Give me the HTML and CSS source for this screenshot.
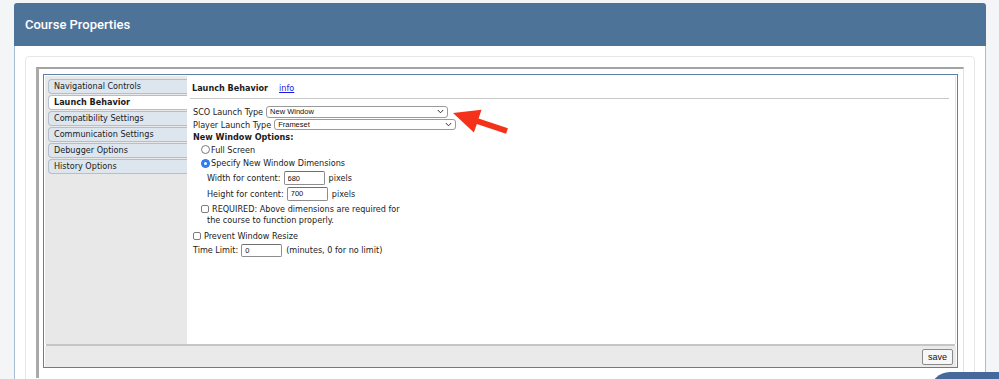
FILE: index.html
```html
<!DOCTYPE html>
<html>
<head>
<meta charset="utf-8">
<title>Course Properties</title>
<link rel="stylesheet" href="styles.css">
</head>
<body>
<div class="panel">
  <div class="panel-head">Course Properties</div>
  <div class="panel-body">
    <div class="well">
      <div class="frame">
        <div class="props">
          <div class="props-main">
            <ul class="tabs">
              <li class="tab">Navigational Controls</li>
              <li class="tab active">Launch Behavior</li>
              <li class="tab">Compatibility Settings</li>
              <li class="tab">Communication Settings</li>
              <li class="tab">Debugger Options</li>
              <li class="tab">History Options</li>
            </ul>
            <div class="content">
              <div class="heading"><span class="title">Launch Behavior</span><a class="info" href="#">info</a></div>
              <div class="rule"></div>
              <div class="row r-sco">
                <span class="lbl">SCO Launch Type</span>
                <span class="sel"><select><option>New Window</option></select><svg class="chev" width="7" height="5" viewBox="0 0 7 5"><path d="M0.8 1 L3.5 3.8 L6.2 1" fill="none" stroke="#333" stroke-width="1"/></svg></span>
              </div>
              <div class="row r-player">
                <span class="lbl">Player Launch Type</span>
                <span class="sel sel-b"><select><option>Frameset</option></select><svg class="chev" width="7" height="5" viewBox="0 0 7 5"><path d="M0.8 1 L3.5 3.8 L6.2 1" fill="none" stroke="#333" stroke-width="1"/></svg></span>
              </div>
              <div class="row r-opts"><b>New Window Options:</b></div>
              <div class="row r-full"><span class="radio"></span>Full Screen</div>
              <div class="row r-spec"><span class="radio checked"></span>Specify New Window Dimensions</div>
              <div class="row r-w"><span class="lbl">Width for content:</span><input class="txt" type="text" value="680"><span class="unit">pixels</span></div>
              <div class="row r-h"><span class="lbl">Height for content:</span><input class="txt" type="text" value="700"><span class="unit">pixels</span></div>
              <div class="req"><span class="check"></span>REQUIRED: Above dimensions are required for<br>the course to function properly.</div>
              <div class="row r-prev"><span class="check"></span>Prevent Window Resize</div>
              <div class="row r-time"><span class="lbl">Time Limit:</span><input class="txt txt-t" type="text" value="0"><span class="unit">(minutes, 0 for no limit)</span></div>
            </div>
          </div>
          <div class="props-sep"></div>
          <div class="props-foot"><button class="save" type="button">save</button></div>
        </div>
      </div>
    </div>
  </div>
</div>
<svg class="arrow" width="70" height="40" viewBox="448 104 70 40">
  <polygon points="453,113 481.5,109.8 478.6,118.4 507.9,128.2 506.1,133.8 476.8,124 473.9,132.6" fill="#f33219"/>
</svg>
<div class="chat"></div>
</body>
</html>
```
FILE: styles.css
```css
html, body {
  margin: 0;
  padding: 0;
  height: 379px;
  overflow: hidden;
}
body {
  background: #f4f5f7;
  font-family: "DejaVu Sans", sans-serif;
  font-stretch: condensed;
  font-size: 9px;
  color: #1b1b1b;
  position: relative;
}
.panel {
  margin: 3px 0 0 14px;
  width: 972px;
}
.panel-head {
  height: 43px;
  line-height: 43px;
  background: #4e7399;
  border-radius: 3px 3px 0 0;
  color: #fff;
  font-family: Roboto, "Liberation Sans", sans-serif;
  font-weight: 500;
  font-size: 13px;
  font-stretch: normal;
  padding-left: 11px;
}
.panel-body {
  background: #fff;
  border-left: 1px solid #a9bdd3;
  border-right: 1px solid #a9bdd3;
  padding: 10px 10px 0 10px;
}
.well {
  border: 1px solid #e6e6e6;
  border-radius: 4px;
  padding: 10px 10px 40px 10px;
}
.frame {
  border-top: 2px solid #a3a3a3;
  border-left: 3px solid #aaaaaa;
  border-right: 1px solid #e2e2e2;
  padding: 5px 5px 10px 4px;
}
.props {
  border: 1px solid #5f80a6;
  padding: 1px 1px 0 1px;
  background: #fff;
}
.props-main {
  display: flex;
  height: 268px;
}
.tabs {
  list-style: none;
  margin: 0;
  padding: 3px 0 0 3px;
  width: 139px;
  background: #e8e8e8;
}
.tab {
  box-sizing: border-box;
  height: 15px;
  line-height: 13px;
  margin-bottom: 1px;
  padding-left: 5px;
  background: #dde6ef;
  border: 1px solid #b3bfcc;
  border-right: none;
  border-radius: 4px 0 0 4px;
  white-space: nowrap;
}
.tab.active {
  background: #fff;
  font-weight: bold;
  margin-right: -1px;
}
.content {
  flex: 1;
  background: #fff;
  padding: 4px 6px 0 3px;
  border-right: 1px solid #e4e4e4;
}
.heading {
  height: 16px;
  line-height: 16px;
  padding-left: 2px;
  display: flex;
  align-items: center;
}
.title {
  font-weight: bold;
}
.info {
  margin-left: 11px;
  color: #1a1ae6;
  text-decoration: underline;
}
.rule {
  height: 1px;
  background: #c8c8c8;
  margin-top: 2px;
}
.row {
  display: flex;
  align-items: center;
  padding-left: 3px;
  white-space: nowrap;
}
.r-sco { margin-top: 6px; height: 13px; }
.r-player { height: 13px; }
.r-opts { height: 12px; }
.r-full { height: 13px; padding-left: 11px; }
.r-spec { height: 14px; padding-left: 11px; }
.r-w { height: 16px; padding-left: 17px; }
.r-h { height: 15px; padding-left: 17px; }
.r-prev { height: 14px; margin-top: 3px; }
.r-time { height: 14px; }
.sel {
  position: relative;
  display: inline-block;
  margin-left: 3px;
  height: 12px;
}
.sel-b { height: 11px; }
.sel select {
  -webkit-appearance: none;
  appearance: none;
  box-sizing: border-box;
  width: 182px;
  height: 100%;
  margin: 0;
  padding: 0 0 0 3px;
  border: 1px solid #9a9a9a;
  border-radius: 3px;
  background: #fff;
  font-family: "Liberation Sans", Arial, sans-serif;
  font-size: 7.5px;
  color: #111;
  line-height: 10px;
  display: block;
}
.chev {
  position: absolute;
  right: 4px;
  top: 50%;
  margin-top: -2.5px;
}
.txt {
  box-sizing: border-box;
  width: 41px;
  height: 14px;
  margin: 0 0 0 3px;
  padding: 0 0 0 3px;
  border: 1px solid #8d8d8d;
  border-top-color: #6f6f6f;
  border-radius: 2px;
  background: #fff;
  font-family: "Liberation Sans", Arial, sans-serif;
  font-size: 7.5px;
  color: #111;
}
.txt-t { height: 13px; }
.unit { margin-left: 4px; }
.radio {
  box-sizing: border-box;
  width: 9px;
  height: 9px;
  border-radius: 50%;
  border: 1px solid #7a7a7a;
  background: #fff;
  margin-right: 1px;
  flex: none;
}
.radio.checked {
  border-color: #1f6fe0;
  background: #2a7cf0;
  box-shadow: inset 0 0 0 2px #2a7cf0, inset 0 0 0 4px #fff;
}
.check {
  box-sizing: border-box;
  display: inline-block;
  width: 8px;
  height: 8px;
  border: 1px solid #7d7d7d;
  border-radius: 2px;
  background: #fff;
  margin-right: 3px;
  flex: none;
}
.req {
  margin-top: 3px;
  padding-left: 17px;
  line-height: 11px;
}
.req .check {
  margin-left: -6px;
  vertical-align: -1px;
}
.props-sep {
  height: 2px;
  background: #c6c6c6;
  margin: 0 1px;
}
.props-foot {
  height: 21px;
  background: #eaeaea;
  display: flex;
  justify-content: flex-end;
  align-items: center;
  padding-right: 3px;
}
.save {
  box-sizing: border-box;
  width: 31px;
  height: 16px;
  padding: 0;
  margin: 0;
  border: 1px solid #8a8a8a;
  border-radius: 2px;
  background: #f7f7f7;
  font-family: "Liberation Sans", Arial, sans-serif;
  font-size: 9px;
  color: #111;
}
.arrow {
  position: absolute;
  left: 448px;
  top: 104px;
}
.chat {
  position: absolute;
  left: 930px;
  top: 372px;
  width: 100px;
  height: 40px;
  border-radius: 20px;
  background: #44699a;
}
```
